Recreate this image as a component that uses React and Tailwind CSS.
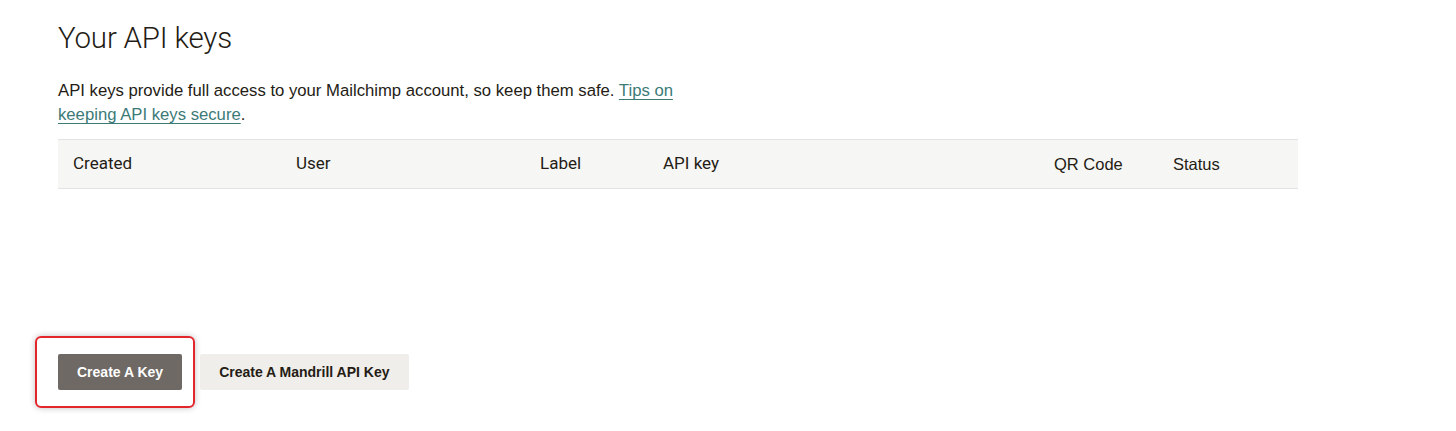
export default function App() {
  const font = { fontFamily: '"Roboto", "Liberation Sans", sans-serif' };
  const lib = { fontFamily: '"Liberation Sans", "Roboto", sans-serif' };
  return (
    <div className="w-[1456px] h-[431px] bg-white text-[#241c15]" style={font}>
      <div className="pl-[58px] pr-[158px] pt-[20px]">
        <h1 className="text-[29.5px] leading-[36px] font-light tracking-[-0.2px]">Your API keys</h1>
        <p className="mt-[23px] text-[16.7px] leading-[24px] max-w-[630px]" style={lib}>
          API keys provide full access to your Mailchimp account, so keep them safe.{" "}
          <a className="text-[#3c7a78] underline underline-offset-[3px] decoration-[1px]" href="#">
            Tips on keeping API keys secure
          </a>
          .
        </p>
        <div className="mt-[12px] h-[50px] bg-[#f6f6f4] border-y border-[#e2e2e0] flex items-center text-[17px]">
          <div className="w-[238px] pl-[15px]">Created</div>
          <div className="w-[244px]">User</div>
          <div className="w-[123px]">Label</div>
          <div className="flex-1">API key</div>
          <div className="w-[119px] text-[16.5px]" style={lib}>QR Code</div>
          <div className="w-[125px] text-[16.5px]" style={lib}>Status</div>
        </div>
        <div className="h-[147px]" />
        <div className="flex items-center gap-[5px] -ml-[23px]">
          <div className="rounded-[6px] border-2 border-[#e3262c] shadow-[0_0_6px_rgba(0,0,0,0.25)] pl-[21px] pr-[11px] py-[16px]">
            <button className="h-[36px] px-[19px] bg-[#6e6964] text-white text-[14px] font-bold rounded-[2px]" style={lib}>
              Create A Key
            </button>
          </div>
          <button className="h-[36px] px-[19px] bg-[#efeeea] text-[#241c15] text-[14px] font-bold rounded-[2px]" style={lib}>
            Create A Mandrill API Key
          </button>
        </div>
      </div>
    </div>
  );
}
